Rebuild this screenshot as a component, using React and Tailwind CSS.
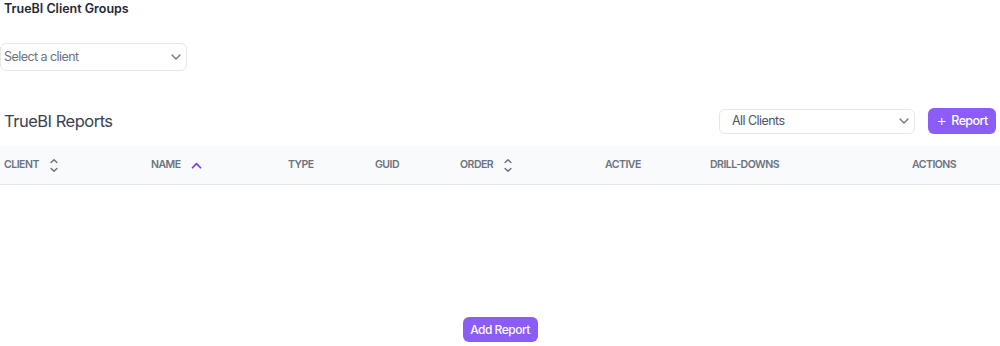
import React from "react";

const Chevron = ({ className = "" }) => (
  <svg viewBox="0 0 20 20" className={className} fill="none" stroke="currentColor" strokeWidth="1.6" strokeLinecap="round" strokeLinejoin="round">
    <path d="M5 7.5l5 5 5-5" />
  </svg>
);

const SortBoth = () => (
  <svg viewBox="0 0 12 20" className="w-[10px] h-[17px] text-[#6b7280]" fill="none" stroke="currentColor" strokeWidth="1.7" strokeLinecap="round" strokeLinejoin="round">
    <path d="M2.5 6.5L6 3l3.5 3.5" />
    <path d="M2.5 13.5L6 17l3.5-3.5" />
  </svg>
);

const SortUp = () => (
  <svg viewBox="0 0 12 10" className="w-[11px] h-[9px] text-[#7c3aed]" fill="none" stroke="currentColor" strokeWidth="1.9" strokeLinecap="round" strokeLinejoin="round">
    <path d="M1.5 7.5L6 3l4.5 4.5" />
  </svg>
);

const cols = [
  { label: "CLIENT", sort: "both" },
  { label: "NAME", sort: "up" },
  { label: "TYPE" },
  { label: "GUID" },
  { label: "ORDER", sort: "both" },
  { label: "ACTIVE" },
  { label: "DRILL-DOWNS" },
  { label: "ACTIONS" },
];

export default function App() {
  return (
    <div className="w-[1000px] h-[346px] bg-white overflow-hidden" style={{ fontFamily: "Inter, 'Liberation Sans', sans-serif" }}>
      <div className="px-1">
        <h2 className="text-[12.5px] leading-[18px] font-semibold text-[#1f2937]">TrueBI Client Groups</h2>
      </div>
      <div className="mt-[25px]">
        <div className="w-[187px] h-[28px] border border-[#e5e7eb] rounded-md flex items-center justify-between pl-[3px] pr-[2px]">
          <span className="text-[12.5px] tracking-[-0.55px] text-[#6b7280]">Select a client</span>
          <Chevron className="w-[16px] h-[16px] text-[#6b7280]" />
        </div>
      </div>
      <div className="mt-[36px] h-[28px] flex items-center justify-between pl-1 pr-1">
        <h1 className="text-[16.5px] leading-[28px] tracking-[-0.5px] text-[#374151]">TrueBI Reports</h1>
        <div className="flex items-center gap-[13px]">
          <div className="w-[196px] h-[25px] border border-[#e5e7eb] rounded-md flex items-center justify-between pl-3 pr-[2px]">
            <span className="text-[12.5px] tracking-[-0.55px] text-[#4b5563]">All Clients</span>
            <Chevron className="w-[16px] h-[16px] text-[#6b7280]" />
          </div>
          <button className="w-[68px] h-[26px] rounded-md bg-[#8b5cf6] text-white text-[12.5px] tracking-[-0.6px] font-medium flex items-center justify-center gap-[5px]">
            <span className="text-[16px] leading-none font-light -mt-[2px]">+</span>
            <span>Report</span>
          </button>
        </div>
      </div>
      <div className="mt-[11px] h-[39px] bg-[#f9fafb] border-b border-[#e5e7eb] grid grid-cols-[147px_137px_87px_85px_145px_105px_202px_1fr] items-center">
        {cols.map((c) => (
          <div key={c.label} className="pl-1 flex items-center gap-[10px] text-[10.5px] font-semibold text-[#6b7280] tracking-[-0.5px]">
            <span>{c.label}</span>
            {c.sort === "both" && <SortBoth />}
            {c.sort === "up" && <SortUp />}
          </div>
        ))}
      </div>
      <div className="mt-[132px] flex justify-center">
        <button className="w-[75px] h-[25px] rounded-md bg-[#8b5cf6] text-white text-[12px] tracking-[-0.5px] font-medium">Add Report</button>
      </div>
    </div>
  );
}
